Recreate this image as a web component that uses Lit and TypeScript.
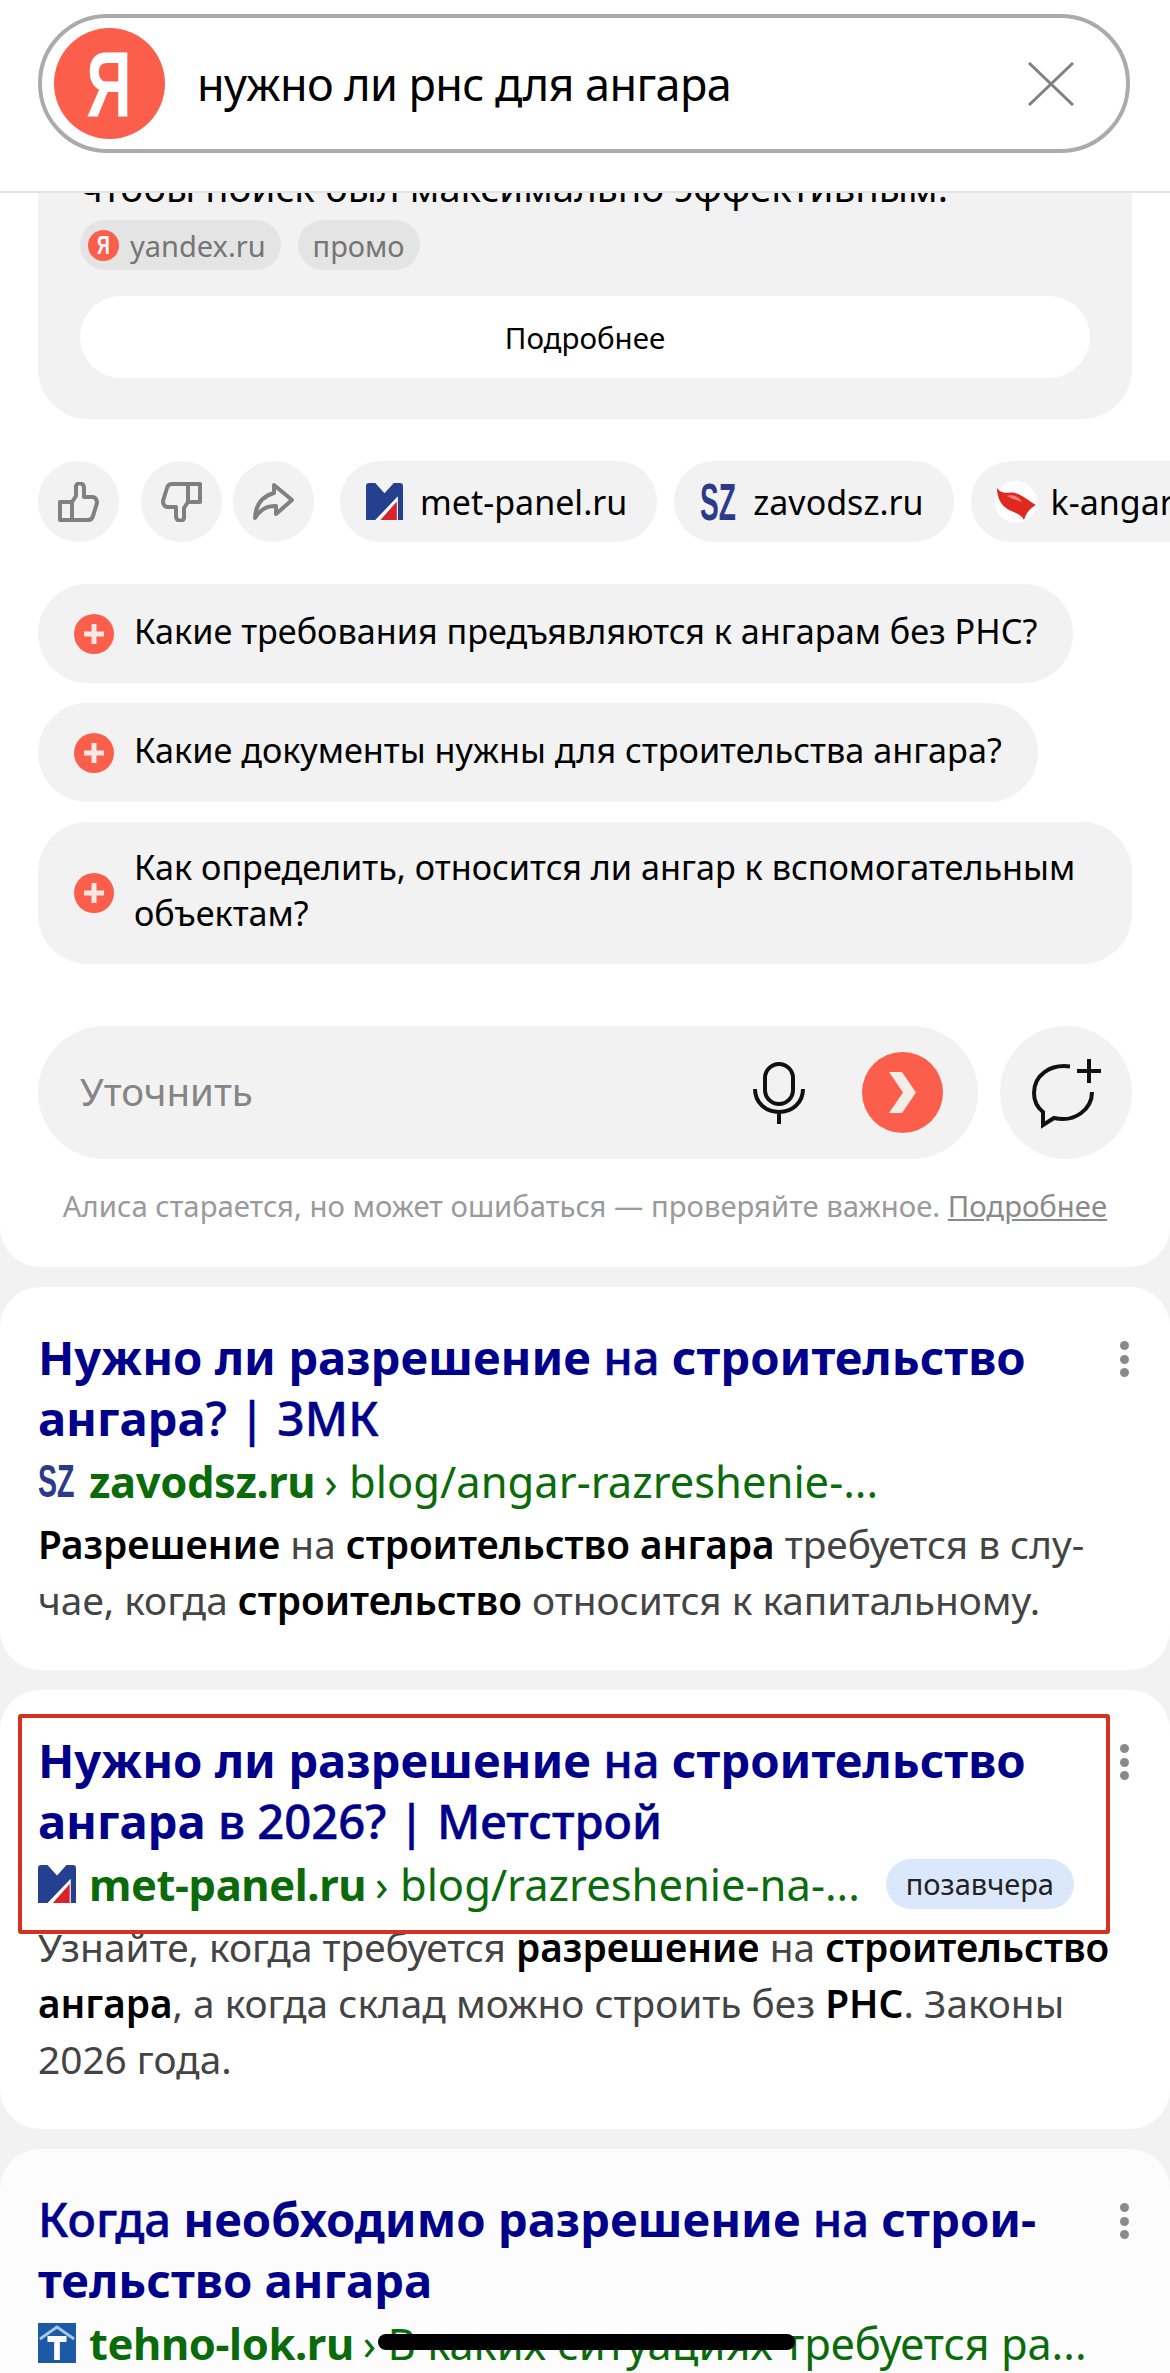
import { LitElement, html, css, svg } from 'lit'
import { customElement } from 'lit/decorators.js'

const metLogo = (size: number) => html`
  <svg width=${size} height=${size} viewBox="0 0 36 36" class="fav">
    <path d="M0 3 Q0 0 3 0 H9 L18 10 L27 0 H33 Q36 0 36 3 V36 H0Z" fill="#24408e"/>
    <path d="M9 36 L31 13 V36Z" fill="#fff"/>
    <path d="M14 36 L30 18 V36Z" fill="#d9232b"/>
  </svg>`

const angarLogo = html`
  <svg width="42" height="42" viewBox="0 0 42 42" class="fav">
    <circle cx="21" cy="21" r="21" fill="#fff"/>
    <path d="M2 7 C8 15 14 10 20 12 C28 14 35 21 41 24 C36 27 31 31 29 39 C26 33 20 32 14 29 C7 25 2 18 2 7Z" fill="#e0281f"/>
    <path d="M12 15 C18 13 24 16 27 21 C22 19 17 18 12 15Z" fill="#f7817a"/>
  </svg>`

const tehnoLogo = html`
  <svg width="38" height="40" viewBox="0 0 40 40" class="fav" preserveAspectRatio="none">
    <rect width="40" height="40" fill="#1d5aa6"/>
    <path d="M2 16 L20 4 L38 16" fill="none" stroke="#a9c6e8" stroke-width="3"/>
    <path d="M10 13 H30 V19 H23 V37 H17 V19 H10Z" fill="#fff"/>
  </svg>`

const plusIcon = html`
  <svg width="40" height="40" viewBox="0 0 40 40" class="plus">
    <circle cx="20" cy="20" r="20" fill="#fb5f4c"/>
    <path d="M20 10 V30 M10 20 H30" stroke="#f6e9e5" stroke-width="5"/>
  </svg>`

const thumbPath = svg`
  <path d="M14 20 L18 14 V4 Q19 1 22 1 Q26 2 26 6 V15 H35 Q39 16 39 21 L35 34 Q34 38 30 38 H14Z
           M2 20 H14 V38 H2Z" fill="none" stroke="#808080" stroke-width="4" stroke-linejoin="round"/>`

interface ResultItem {
  title: unknown
  logo: unknown
  domain: string
  path: string
  date?: string
  snippet: unknown
  marked?: boolean
}

const results: ResultItem[] = [
  {
    title: html`<b>Нужно ли разрешение</b> на <b>строительство ангара</b>? | ЗМК`,
    logo: html`<span class="sz small"><span>SZ</span></span>`,
    domain: 'zavodsz.ru',
    path: 'blog/angar-razreshenie-...',
    snippet: html`<b>Разрешение</b> на <b>строительство ангара</b> требуется в слу-<br />чае, когда
      <b>строительство</b> относится к капитальному.`,
  },
  {
    title: html`<b>Нужно ли разрешение</b> на <b>строительство ангара</b> в 2026? | Метстрой`,
    logo: metLogo(38),
    domain: 'met-panel.ru',
    path: 'blog/razreshenie-na-...',
    date: 'позавчера',
    marked: true,
    snippet: html`Узнайте, когда требуется <b>разрешение</b> на <b>строительство</b><br /><b>ангара</b>, а когда
      склад можно строить без <b>РНС</b>. Законы<br />2026 года.`,
  },
  {
    title: html`Когда <b>необходимо разрешение</b> на <b>строи-<br />тельство ангара</b>`,
    logo: tehnoLogo,
    domain: 'tehno-lok.ru',
    path: 'В каких ситуациях требуется ра...',
    snippet: '',
  },
]

@customElement('app-root')
export class AppRoot extends LitElement {
  static styles = css`
    :host {
      display: block;
      position: relative;
      width: 1170px;
      height: 2373px;
      overflow: hidden;
      background: #f2f2f2;
      font-family: 'Noto Sans', 'Liberation Sans', sans-serif;
      color: #000;
    }

    .header {
      position: relative;
      z-index: 2;
      height: 193px;
      padding: 14px 40px 0 38px;
      box-sizing: border-box;
      background: #fff;
      border-bottom: 2px solid #e4e4e4;
    }
    .search {
      display: flex;
      align-items: center;
      height: 139px;
      box-sizing: border-box;
      padding: 0 52px 0 12px;
      border: 4px solid #ababab;
      border-radius: 70px;
      background: #fff;
    }
    .ya {
      display: flex;
      flex: none;
      align-items: center;
      justify-content: center;
      width: 111px;
      height: 111px;
      border-radius: 50%;
      background: #fb5f4c;
      color: #fff;
      font-family: 'Liberation Sans', sans-serif;
      font-size: 92px;
      font-weight: 700;
      line-height: 1;
    }
    .ya span {
      transform: scaleX(0.68);
    }
    .query {
      flex: 1;
      margin-left: 32px;
      font-size: 45px;
      letter-spacing: -0.6px;
    }

    .top {
      padding: 0 38px 41px;
      background: #fff;
      border-radius: 0 0 40px 40px;
      overflow: hidden;
    }
    .ai {
      margin-top: -80px;
      padding: 46px 42px 41px;
      background: #f2f2f2;
      border-radius: 50px;
    }
    .ai-text {
      font-size: 38.5px;
      line-height: 56px;
      white-space: nowrap;
    }
    .tags {
      display: flex;
      gap: 17px;
      margin-top: 5px;
    }
    .tag {
      display: flex;
      align-items: center;
      gap: 11px;
      height: 50px;
      padding: 0 15px;
      border-radius: 25px;
      background: #e4e4e4;
      color: #757575;
      font-size: 29px;
    }
    .tag.src {
      padding: 0 15px 0 8px;
    }
    .ya.tiny {
      width: 31px;
      height: 31px;
      font-size: 26px;
    }
    .more {
      display: flex;
      align-items: center;
      justify-content: center;
      height: 82px;
      margin-top: 26px;
      border-radius: 41px;
      background: #fff;
      font-size: 29.5px;
    }

    .actions {
      display: flex;
      align-items: stretch;
      height: 81px;
      margin: 42px -38px 42px 0;
    }
    .round {
      display: flex;
      flex: none;
      align-items: center;
      justify-content: center;
      width: 81px;
      border-radius: 50%;
      background: #f2f2f2;
    }
    .round.second {
      margin-left: 22px;
    }
    .round.third {
      margin-left: 11px;
    }
    .site {
      display: flex;
      flex: none;
      align-items: center;
      gap: 17px;
      padding: 0 30px 0 26px;
      border-radius: 41px;
      background: #f2f2f2;
      font-size: 34px;
    }
    .site.first {
      margin-left: 26px;
    }
    .site + .site {
      margin-left: 17px;
    }
    .site.last {
      gap: 14px;
      padding-left: 24px;
    }
    .fav {
      flex: none;
      display: block;
    }
    .sz {
      display: block;
      flex: none;
      width: 36px;
      color: #2c3a8c;
      font-family: 'Liberation Sans', sans-serif;
      font-size: 52px;
      font-weight: 700;
      line-height: 1;
    }
    .sz span {
      display: block;
      transform: scaleX(0.54);
      transform-origin: left center;
      white-space: nowrap;
    }
    .sz.small {
      font-size: 46px;
    }
    .sz.small span {
      transform: scaleX(0.62);
    }

    .suggest {
      display: flex;
      flex-direction: column;
      gap: 20px;
      align-items: flex-start;
    }
    .sug {
      display: flex;
      align-items: center;
      gap: 20px;
      min-height: 99px;
      box-sizing: border-box;
      padding: 0 36px;
      border-radius: 50px;
      background: #f2f2f2;
      font-size: 34.2px;
      line-height: 46px;
      white-space: nowrap;
    }
    .sug span {
      padding-bottom: 6px;
    }
    .sug.tall {
      width: 100%;
      height: 142px;
    }
    .plus {
      flex: none;
    }

    .ask {
      display: flex;
      gap: 22px;
      margin-top: 62px;
    }
    .input {
      display: flex;
      flex: none;
      align-items: center;
      width: 940px;
      height: 133px;
      box-sizing: border-box;
      padding: 0 35px 0 42px;
      border-radius: 67px;
      background: #f2f2f2;
    }
    .placeholder {
      flex: 1;
      color: #858585;
      font-size: 38.5px;
      padding-bottom: 3px;
    }
    .send {
      display: flex;
      align-items: center;
      justify-content: center;
      width: 81px;
      height: 81px;
      margin-left: 57px;
      border-radius: 50%;
      background: #fb5f4c;
    }
    .newchat {
      display: flex;
      align-items: center;
      justify-content: center;
      width: 132px;
      height: 133px;
      border-radius: 50%;
      background: #f2f2f2;
    }
    .note {
      margin-top: 27px;
      color: #9a9a9a;
      font-size: 29.3px;
      line-height: 40px;
      text-align: center;
      white-space: nowrap;
    }
    .note u {
      color: #8a8a8a;
    }

    .card {
      position: relative;
      margin-top: 20px;
      padding: 40px 38px 42px;
      background: #fff;
      border-radius: 40px;
    }
    .card:last-of-type {
      background: #fcfcfc;
    }
    .title {
      color: #00008b;
      font-size: 47.2px;
      font-weight: 500;
      line-height: 61px;
      -webkit-text-stroke: 0.5px #00008b;
    }
    .title b {
      font-weight: 700;
      -webkit-text-stroke: 0;
    }
    .url {
      display: flex;
      align-items: center;
      height: 64px;
      color: #0b6b0b;
      font-size: 43.5px;
      white-space: pre;
    }
    .url .dom {
      margin: 0 9px 0 13px;
      font-weight: 700;
      letter-spacing: -0.4px;
    }
    .url .sz {
      width: 38px;
    }
    .date {
      margin-left: auto;
      margin-right: 58px;
      padding: 0 20px;
      height: 50px;
      border-radius: 25px;
      background: #dbe7fb;
      color: #222;
      font-size: 29px;
      line-height: 50px;
    }
    .snippet {
      margin-top: 3px;
      color: #444;
      font-size: 38.8px;
      line-height: 56px;
      white-space: nowrap;
    }
    .snippet b {
      color: #000;
      font-weight: 600;
    }
    .kebab {
      position: absolute;
      top: 54px;
      right: 41px;
      display: flex;
      flex-direction: column;
      gap: 4.5px;
    }
    .kebab i {
      width: 9px;
      height: 9px;
      border-radius: 50%;
      background: #8a8a8a;
    }
    .mark {
      position: absolute;
      top: 24px;
      left: 18px;
      width: 1092px;
      height: 220px;
      box-sizing: border-box;
      border: 4px solid #d2321f;
      border-radius: 3px;
    }
    .home {
      position: absolute;
      left: 378px;
      top: 2334px;
      z-index: 3;
      width: 417px;
      height: 16px;
      border-radius: 8px;
      background: #000;
    }
  `

  renderResult(r: ResultItem) {
    return html`
      <section class="card">
        <div class="title">${r.title}</div>
        <div class="url">${r.logo}<span class="dom">${r.domain}</span><span>› ${r.path}</span>${r.date
            ? html`<span class="date">${r.date}</span>`
            : ''}</div>
        ${r.snippet ? html`<div class="snippet">${r.snippet}</div>` : ''}
        <div class="kebab"><i></i><i></i><i></i></div>
        ${r.marked ? html`<div class="mark"></div>` : ''}
      </section>
    `
  }

  render() {
    return html`
      <header class="header">
        <div class="search">
          <div class="ya"><span>Я</span></div>
          <div class="query">нужно ли рнс для ангара</div>
          <svg width="46" height="44" viewBox="0 0 46 44">
            <path d="M1 1 L45 43 M45 1 L1 43" stroke="#808080" stroke-width="3" />
          </svg>
        </div>
      </header>

      <div class="top">
        <div class="ai">
          <div class="ai-text">чтобы поиск был максимально эффективным.</div>
          <div class="tags">
            <span class="tag src"><span class="ya tiny"><span>Я</span></span>yandex.ru</span>
            <span class="tag">промо</span>
          </div>
          <div class="more">Подробнее</div>
        </div>

        <div class="actions">
          <div class="round">
            <svg width="41" height="40" viewBox="0 0 41 40">${thumbPath}</svg>
          </div>
          <div class="round second">
            <svg width="41" height="40" viewBox="0 0 41 40" style="transform: rotate(180deg)">${thumbPath}</svg>
          </div>
          <div class="round third">
            <svg width="41" height="38" viewBox="0 0 41 38">
              <path d="M21 2 L39 17 L23 31 V23 Q10 22 2 35 Q3 15 21 10Z" fill="none" stroke="#808080"
                stroke-width="4" stroke-linejoin="round" />
            </svg>
          </div>
          <div class="site first">${metLogo(37)}met-panel.ru</div>
          <div class="site"><span class="sz"><span>SZ</span></span>zavodsz.ru</div>
          <div class="site last">${angarLogo}k-angar.ru</div>
        </div>

        <div class="suggest">
          <div class="sug">${plusIcon}<span>Какие требования предъявляются к ангарам без РНС?</span></div>
          <div class="sug">${plusIcon}<span>Какие документы нужны для строительства ангара?</span></div>
          <div class="sug tall">${plusIcon}<span>Как определить, относится ли ангар к вспомогательным<br />объектам?</span></div>
        </div>

        <div class="ask">
          <div class="input">
            <span class="placeholder">Уточнить</span>
            <svg width="52" height="62" viewBox="0 0 52 62" fill="none" stroke="#111" stroke-width="4">
              <rect x="12" y="2" width="28" height="40" rx="14" />
              <path d="M2 27 C2 41 13 50 26 50 C39 50 50 41 50 27 M26 50 V62" />
            </svg>
            <span class="send">
              <svg width="27" height="41" viewBox="0 0 27 41"><path d="M0 0 H13 L27 20.5 L13 41 H0 L14 20.5Z" fill="#f6ece8" /></svg>
            </span>
          </div>
          <div class="newchat">
            <svg width="72" height="72" viewBox="0 0 72 72" fill="none" stroke="#111" stroke-width="4">
              <path d="M40 9.5 C20 7 4 18 4 36 C4 45 8 51 13 55 L13 68 L24 61 C45 66 62 52 62 35" />
              <path d="M59 2 V26 M47 14 H71" />
            </svg>
          </div>
        </div>

        <div class="note">Алиса старается, но может ошибаться — проверяйте важное. <u>Подробнее</u></div>
      </div>

      ${results.map((r) => this.renderResult(r))}
      <div class="home"></div>
    `
  }
}
